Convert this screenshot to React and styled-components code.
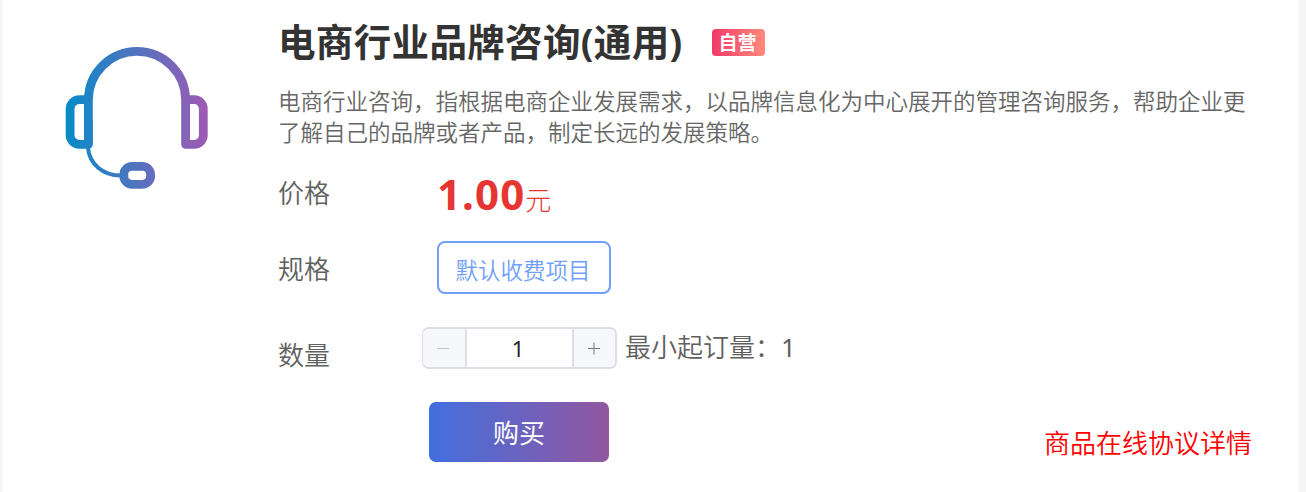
import React, { useState } from "react";
import styled, { createGlobalStyle } from "styled-components";

function HeadsetIcon() {
  return (
    <svg width="146" height="146" viewBox="64 45 146 146" fill="none">
      <defs>
        <linearGradient
          id="headset"
          gradientUnits="userSpaceOnUse"
          x1="66"
          y1="0"
          x2="208"
          y2="0"
        >
          <stop offset="0" stopColor="#078bc8" />
          <stop offset="1" stopColor="#9f5ab5" />
        </linearGradient>
      </defs>
      <g stroke="url(#headset)" strokeWidth="8.8" strokeLinejoin="round">
        <path d="M88.4 144.3V100a48.6 48.6 0 0 1 97.2 0v44.3h8.7a9 9 0 0 0 9-9v-26.6a9 9 0 0 0-9-9h-8.7" />
        <path d="M88.4 99.7h-8.9a9.4 9.4 0 0 0-9.4 9.4v25.8a9.4 9.4 0 0 0 9.4 9.4h8.9V120" />
        <rect x="123.8" y="166.4" width="26.8" height="17.9" rx="8.2" />
        <path d="M88 148c1.5 16 15 27.4 32 27.4" strokeWidth="4" />
      </g>
    </svg>
  );
}

function Stepper() {
  const [count, setCount] = useState(1);

  return (
    <StepperBox>
      <StepButton disabled={count <= 1} onClick={() => setCount(count - 1)}>
        <svg width="14" height="14" viewBox="0 0 14 14">
          <path d="M1 7.5h12" stroke="currentColor" />
        </svg>
      </StepButton>
      <Count>{count}</Count>
      <StepButton onClick={() => setCount(count + 1)}>
        <svg width="14" height="14" viewBox="0 0 14 14">
          <path d="M1 7.5h12M7 1.5v12" stroke="currentColor" />
        </svg>
      </StepButton>
    </StepperBox>
  );
}

function App() {
  return (
    <Page>
      <GlobalStyle />
      <Card>
        <IconColumn>
          <HeadsetIcon />
        </IconColumn>
        <Info>
          <TitleRow>
            <Title>电商行业品牌咨询(通用)</Title>
            <Tag>自营</Tag>
          </TitleRow>
          <Description>
            电商行业咨询，指根据电商企业发展需求，以品牌信息化为中心展开的管理咨询服务，帮助企业更了解自己的品牌或者产品，制定长远的发展策略。
          </Description>
          <Row $height={76}>
            <Label>价格</Label>
            <Price>
              <b>1.00</b>元
            </Price>
          </Row>
          <Row $height={76}>
            <Label>规格</Label>
            <Spec>默认收费项目</Spec>
          </Row>
          <Row $height={96}>
            <Label>数量</Label>
            <Quantity>
              <Stepper />
              <Minimum>
                最小起订量：<b>1</b>
              </Minimum>
            </Quantity>
          </Row>
          <Footer>
            <BuyButton>购买</BuyButton>
            <Agreement>商品在线协议详情</Agreement>
          </Footer>
        </Info>
      </Card>
    </Page>
  );
}

export default App;

const GlobalStyle = createGlobalStyle`
  * {
    box-sizing: border-box;
  }
  body {
    margin: 0;
    font-family: "Noto Sans", "Noto Sans CJK SC", sans-serif;
    color: #606266;
  }
  button {
    font-family: inherit;
    cursor: pointer;
  }
`;

const Page = styled.div`
  height: 492px;
  padding: 0 8px 0 2px;
  background: #f5f5f5;
  overflow: hidden;
`;

const Card = styled.main`
  display: flex;
  height: 100%;
  background: #fff;
`;

const IconColumn = styled.div`
  flex: 0 0 276px;
  padding: 45px 0 0 62px;
`;

const Info = styled.section`
  width: 974px;
  padding-top: 14px;
`;

const TitleRow = styled.div`
  display: flex;
  align-items: center;
  height: 56px;
`;

const Title = styled.h1`
  margin: 0;
  font-size: 37.5px;
  line-height: 56px;
  font-weight: 700;
  letter-spacing: 0.35px;
  color: #333;
`;

const Tag = styled.span`
  width: 53px;
  height: 27px;
  margin-left: 29px;
  padding: 1px 1px 0 0;
  border-radius: 4px;
  background: linear-gradient(90deg, #f03a68, #ff8a7c);
  color: #fff;
  font-size: 19px;
  font-weight: 700;
  line-height: 27px;
  text-align: center;
`;

const Description = styled.p`
  height: 83px;
  margin: 0;
  padding-top: 16px;
  font-size: 22.5px;
  font-weight: 350;
  line-height: 31px;
  color: #666;
`;

const Row = styled.div`
  display: flex;
  align-items: center;
  height: ${({ $height }) => $height}px;
`;

const Label = styled.span`
  width: 159px;
  padding-top: 1px;
  font-size: 26px;
  font-weight: 350;
  color: #606060;
`;

const Price = styled.div`
  display: flex;
  align-items: baseline;
  padding-top: 4px;
  font-size: 26px;
  font-weight: 300;
  color: #e63532;

  b {
    font-size: 42px;
    font-weight: 700;
    letter-spacing: 1.1px;
  }
`;

const Spec = styled.button`
  width: 174px;
  height: 53px;
  padding: 5px 2px 0 0;
  border: 2px solid #709ffb;
  border-radius: 8px;
  background: #fff;
  color: #709ffb;
  font-size: 22.5px;
  font-weight: 350;
`;

const Quantity = styled.div`
  display: flex;
  align-items: center;
  margin: 0 0 10px -15px;
`;

const StepperBox = styled.div`
  display: flex;
  width: 195px;
  height: 42px;
  border: 2px solid #dcdfe6;
  border-left-width: 1px;
  border-radius: 7px;
  overflow: hidden;
`;

const StepButton = styled.button`
  display: flex;
  align-items: center;
  justify-content: center;
  width: 42px;
  padding: 0;
  border: none;
  background: #f5f7fa;
  color: #777;

  &:last-child {
    width: 41px;
    padding-right: 1px;
  }

  &:disabled {
    padding-right: 2px;
    color: #c0c4cc;
  }
`;

const Count = styled.span`
  flex: 1;
  padding-right: 3px;
  border: solid #dcdfe6;
  border-width: 0 2px;
  color: #222;
  font-size: 22px;
  line-height: 38px;
  text-align: center;
`;

const Minimum = styled.span`
  margin: -4px 0 0 8px;
  font-size: 26px;
  font-weight: 350;
  color: #606060;

  b {
    font-weight: 400;
  }
`;

const Footer = styled.div`
  display: flex;
  align-items: flex-start;
  justify-content: space-between;
`;

const BuyButton = styled.button`
  width: 180px;
  height: 60px;
  margin: 1px 0 0 151px;
  border: none;
  border-radius: 7px;
  background: linear-gradient(90deg, #416fdf, #93569f);
  color: #fff;
  font-size: 26px;
`;

const Agreement = styled.a`
  margin-top: 22px;
  color: #f00;
  font-size: 26px;
  font-weight: 350;
`;
